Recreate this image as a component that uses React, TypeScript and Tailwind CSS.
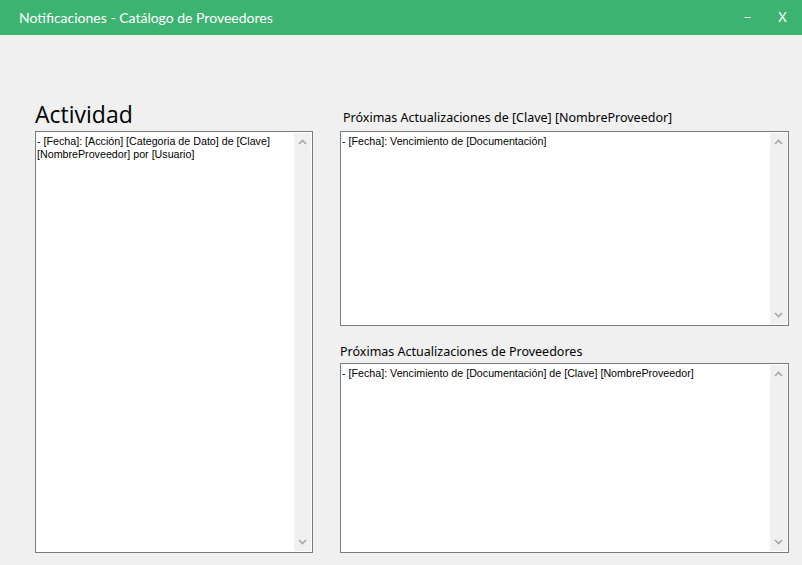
import React from "react";

const Chevron = ({ up }: { up?: boolean }) => (
  <svg width="9" height="6" viewBox="0 0 9 6" className="block">
    <polyline
      points={up ? "1,5 4.5,1.5 8,5" : "1,1 4.5,4.5 8,1"}
      fill="none"
      stroke="#a6a6a6"
      strokeWidth="1.6"
    />
  </svg>
);

const TextBox = ({ h, lines }: { h: string; lines: string[] }) => (
  <div className={`flex border border-[#7a7a7a] bg-white ${h}`}>
    <div
      className="flex-1 pl-[1px] pt-[3px] text-[10.7px] leading-[13px] text-black"
      style={{ fontFamily: '"Liberation Sans", Arial, sans-serif' }}
    >
      {lines.map((l, i) => (
        <div key={i}>{l}</div>
      ))}
    </div>
    <div className="my-[1px] mr-[1px] flex w-[17px] flex-col items-center justify-between bg-[#f0f0f0] py-[6px]">
      <Chevron up />
      <Chevron />
    </div>
  </div>
);

export default function App() {
  return (
    <div className="h-[565px] w-[802px] overflow-hidden bg-[#f0f0f0]">
      <div className="flex h-[35px] items-center bg-[#3cb371] pl-[19px] text-white">
        <div
          className="flex-1 text-[14px]"
          style={{ fontFamily: 'Lato, "Noto Sans", sans-serif' }}
        >
          Notificaciones - Catálogo de Proveedores
        </div>
        <div className="flex w-[35px] justify-center text-[13px]" style={{ fontFamily: 'Lato, sans-serif' }}>
          −
        </div>
        <div className="flex w-[35px] justify-center text-[13px] mr-[2px]" style={{ fontFamily: 'Lato, sans-serif' }}>
          X
        </div>
      </div>
      <div className="flex pl-[35px] pt-[65px]">
        <div className="flex w-[278px] flex-col">
          <div
            className="flex h-[31px] items-end pb-[2px] text-[23px] leading-[30px] text-black"
            style={{ fontFamily: '"Open Sans", "Noto Sans", sans-serif' }}
          >
            Actividad
          </div>
          <TextBox
            h="h-[422px]"
            lines={[
              "- [Fecha]: [Acción] [Categoria de Dato] de [Clave]",
              "[NombreProveedor] por [Usuario]",
            ]}
          />
        </div>
        <div className="ml-[27px] flex w-[449px] flex-col">
          <div
            className="flex h-[31px] items-end pb-[5px] pl-[3px] text-[12.5px] leading-[16px] text-black"
            style={{ fontFamily: '"Noto Sans", sans-serif' }}
          >
            Próximas Actualizaciones de [Clave] [NombreProveedor]
          </div>
          <TextBox h="h-[195px]" lines={["- [Fecha]: Vencimiento de [Documentación]"]} />
          <div
            className="flex h-[37px] items-end pb-[3px] text-[12.5px] leading-[16px] text-black"
            style={{ fontFamily: '"Noto Sans", sans-serif' }}
          >
            Próximas Actualizaciones de Proveedores
          </div>
          <TextBox
            h="h-[190px]"
            lines={["- [Fecha]: Vencimiento de [Documentación] de [Clave] [NombreProveedor]"]}
          />
        </div>
      </div>
    </div>
  );
}
